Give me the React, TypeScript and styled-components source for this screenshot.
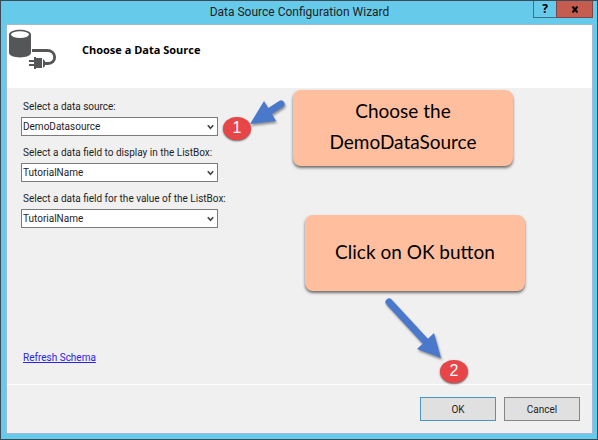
import React from "react";
import styled, { createGlobalStyle } from "styled-components";

const GlobalStyle = createGlobalStyle`
  *, *::before, *::after { box-sizing: border-box; }
  body {
    margin: 0;
    background: #66cbea;
    font-family: "Roboto", "Open Sans", sans-serif;
    font-size: 10px;
    color: #1e1e1e;
  }
  button, select { font: inherit; color: inherit; }
`;

const Dialog = styled.main`
  display: flex;
  flex-direction: column;
  min-height: 100vh;
  padding: 0 4px 5px 5px;
  border: 1px solid #3b4a56;
  background: #66cbea;
`;

const TitleBar = styled.header`
  display: grid;
  grid-template-columns: 60px 1fr 60px;
  height: 23px;
`;

const Title = styled.h1`
  grid-column: 2;
  margin: 0;
  font-size: 12px;
  font-weight: 400;
  line-height: 23px;
  text-align: center;
  white-space: nowrap;
`;

const WindowButtons = styled.div`
  display: flex;
  justify-content: flex-end;
`;

const WindowButton = styled.button<{ $close?: boolean }>`
  display: flex;
  align-items: center;
  justify-content: center;
  width: ${(p) => (p.$close ? 37 : 24)}px;
  height: 17px;
  flex: none;
  margin-left: ${(p) => (p.$close ? -1 : 0)}px;
  padding: 0;
  border: 1px solid ${(p) => (p.$close ? "#7a4646" : "#37738a")};
  border-top: 0;
  background: ${(p) => (p.$close ? "#c45c50" : "#66cbea")};
  color: #000;
  font-family: "Open Sans", sans-serif;
  font-size: 12px;
  font-weight: 700;
  line-height: 16px;
`;

const Panel = styled.div`
  display: flex;
  flex: 1;
  flex-direction: column;
  border: 1px solid #9fb9d6;
  background: #f0f0f0;
`;

const Banner = styled.div`
  display: flex;
  gap: 25px;
  height: 63px;
  padding: 4px 2px;
  background: #fff;
`;

const Heading = styled.h2`
  margin: 0;
  padding-top: 13px;
  color: #000;
  font-family: "Open Sans", sans-serif;
  font-size: 11px;
  font-weight: 700;
  line-height: 16px;
`;

const Form = styled.form`
  display: flex;
  flex: 1;
  flex-direction: column;
`;

const Body = styled.section`
  position: relative;
  display: flex;
  flex: 1;
  flex-direction: column;
  align-items: flex-start;
  gap: 10px;
  padding: 12px 14px 18px;
  border-bottom: 1px solid #fff;
`;

const Field = styled.div`
  display: grid;
  grid-template-columns: minmax(0, 1fr);
  gap: 3px;
  width: 197px;
`;

const Label = styled.label`
  padding-left: 2px;
  line-height: 14px;
  white-space: nowrap;
`;

const SelectBox = styled.div`
  display: grid;
  align-items: center;

  > * { grid-area: 1 / 1; }
  > svg { justify-self: end; margin-right: 4px; pointer-events: none; }
`;

const Select = styled.select`
  width: 100%;
  height: 19px;
  padding: 0 16px 0 1px;
  border: 1px solid #7b7b7b;
  border-radius: 0;
  background: #fff;
  appearance: none;
`;

const SchemaLink = styled.a`
  margin-top: auto;
  margin-left: 2px;
  color: #2a22ee;
  line-height: 16px;
`;

const Footer = styled.footer`
  display: flex;
  justify-content: flex-end;
  gap: 8px;
  padding: 12px;
`;

const Button = styled.button<{ $primary?: boolean }>`
  width: 76px;
  height: 24px;
  padding: 0;
  border: 1px solid ${(p) => (p.$primary ? "#4a94c4" : "#858585")};
  background: #e0e0e0;
`;

const Callout = styled.aside<{ $x: number; $y: number }>`
  position: absolute;
  left: ${(p) => p.$x}px;
  top: ${(p) => p.$y}px;
  display: flex;
  align-items: center;
  justify-content: center;
  width: 220px;
  height: 76px;
  padding: 0 24px 4px;
  border-radius: 8px;
  background: #ffbf9f;
  box-shadow: 0 2px 3px rgba(0, 0, 0, 0.55);
  color: #000;
  font-family: "Lato", sans-serif;
  font-size: 19px;
  line-height: 31px;
  text-align: center;
`;

const Badge = styled.span<{ $x: number; $y: number }>`
  position: absolute;
  left: ${(p) => p.$x}px;
  top: ${(p) => p.$y}px;
  width: 28px;
  height: 23px;
  border-radius: 50%;
  background: #e84548;
  box-shadow: 0 1px 2px rgba(0, 0, 0, 0.6);
  color: #fff;
  font-family: "Liberation Sans", sans-serif;
  font-size: 16px;
  line-height: 22px;
  text-align: center;
`;

const Arrow = styled.svg<{ $x: number; $y: number }>`
  position: absolute;
  left: ${(p) => p.$x}px;
  top: ${(p) => p.$y}px;
  overflow: visible;
  fill: #4a78cb;
  stroke: #4a78cb;
  filter: drop-shadow(1px 2px 1px rgba(0, 0, 0, 0.4));
`;

const DatabaseIcon = () => (
  <svg width="48" height="42" viewBox="0 0 48 42" aria-hidden="true">
    <path d="M0 5.5C0 -1 22 -1 22 5.5V23.5C22 30 0 30 0 23.5Z" fill="#545658" />
    <ellipse cx="11" cy="5.6" rx="9" ry="3.4" fill="#fff" />
    <path d="M23 21.5H38C48 21.5 48 34.5 39 34.5H36" fill="none" stroke="#545658" strokeWidth="2.8" />
    <path d="M25 28H27V40H25ZM27 29H33V39H27ZM34 30L36 32V37L34 39ZM20 31H25V33H20ZM20 35H25V37H20Z" fill="#545658" />
  </svg>
);

const Chevron = () => (
  <svg width="7" height="6" viewBox="0 0 7 6" aria-hidden="true">
    <path d="M0.8 1.2L3.5 4.2L6.2 1.2" fill="none" stroke="#444" strokeWidth="1.7" />
  </svg>
);

const fields = [
  { id: "source", label: "Select a data source:", value: "DemoDatasource" },
  { id: "display", label: "Select a data field to display in the ListBox:", value: "TutorialName" },
  { id: "value", label: "Select a data field for the value of the ListBox:", value: "TutorialName" },
];

export default function App() {
  return (
    <>
      <GlobalStyle />
      <Dialog>
        <TitleBar>
          <Title>Data Source Configuration Wizard</Title>
          <WindowButtons>
            <WindowButton aria-label="Help">?</WindowButton>
            <WindowButton $close aria-label="Close">
              <svg width="8" height="7" viewBox="0 0 8 7" aria-hidden="true">
                <path d="M1.5 0.5L6.5 6.5M6.5 0.5L1.5 6.5" stroke="#000" strokeWidth="2" />
              </svg>
            </WindowButton>
          </WindowButtons>
        </TitleBar>
        <Panel>
          <Banner>
            <DatabaseIcon />
            <Heading>Choose a Data Source</Heading>
          </Banner>
          <Form onSubmit={(e) => e.preventDefault()}>
            <Body>
              {fields.map((f) => (
                <Field key={f.id}>
                  <Label htmlFor={f.id}>{f.label}</Label>
                  <SelectBox>
                    <Select id={f.id} defaultValue={f.value}>
                      <option>{f.value}</option>
                    </Select>
                    <Chevron />
                  </SelectBox>
                </Field>
              ))}
              <SchemaLink href="#refresh">Refresh Schema</SchemaLink>
              <Callout $x={286} $y={2}>Choose the DemoDataSource</Callout>
              <Callout $x={298} $y={127}>Click on OK button</Callout>
              <Badge $x={216} $y={29}>1</Badge>
              <Badge $x={433} $y={272}>2</Badge>
              <Arrow $x={243} $y={12} width="36" height="26" viewBox="0 0 36 26">
                <path d="M31 4L17 13" strokeWidth="7" strokeLinecap="round" />
                <path d="M0 24L14 1L26 21Z" stroke="none" />
              </Arrow>
              <Arrow $x={378} $y={209} width="60" height="64" viewBox="0 0 60 64">
                <path d="M4 5L41 45" strokeWidth="7" strokeLinecap="round" />
                <path d="M56 61L49 36L32 52Z" stroke="none" />
              </Arrow>
            </Body>
            <Footer>
              <Button $primary type="submit">OK</Button>
              <Button type="button">Cancel</Button>
            </Footer>
          </Form>
        </Panel>
      </Dialog>
    </>
  );
}
